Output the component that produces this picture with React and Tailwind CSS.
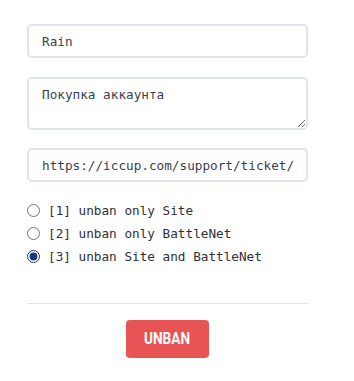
import React, { useState } from "react";

function App() {
  const [nick, setNick] = useState("Rain");
  const [reason, setReason] = useState("Покупка аккаунта");
  const [link, setLink] = useState("https://iccup.com/support/ticket/");
  const [mode, setMode] = useState("3");

  const options = [
    { id: "1", label: "[1] unban only Site" },
    { id: "2", label: "[2] unban only BattleNet" },
    { id: "3", label: "[3] unban Site and BattleNet" },
  ];

  return (
    <div className="w-[354px] h-[381px] bg-white px-[27px] pt-[24px] font-['DejaVu_Sans_Mono','Liberation_Mono',monospace] text-[12.7px] text-[#3b3f4a]">
      <input
        type="text"
        value={nick}
        onChange={(e) => setNick(e.target.value)}
        className="block w-[281px] h-[34px] border-2 border-[#dfe3ee] rounded-[5px] px-[13px] outline-none"
      />
      <textarea
        value={reason}
        onChange={(e) => setReason(e.target.value)}
        className="block mt-[19px] w-[281px] h-[53px] border-2 border-[#dfe3ee] rounded-[5px] px-[13px] pt-[6px] outline-none resize-y"
      />
      <input
        type="text"
        value={link}
        onChange={(e) => setLink(e.target.value)}
        className="block mt-[18px] w-[281px] h-[34px] border-2 border-[#dfe3ee] rounded-[5px] pl-[13px] pr-[8px] outline-none"
      />

      <div className="mt-[17px] flex flex-col">
        {options.map((o) => (
          <label key={o.id} className="flex items-center h-[23px] text-[#2f3136] cursor-pointer">
            <input
              type="radio"
              name="mode"
              checked={mode === o.id}
              onChange={() => setMode(o.id)}
              className="w-[13px] h-[13px] ml-0 mr-[8px] accent-[#1a3a7a]"
            />
            {o.label}
          </label>
        ))}
      </div>

      <div className="mt-[35px] w-[281px] border-t border-[#e4e4e4]"></div>

      <div className="flex justify-center w-[281px] mt-[16px]">
        <button className="w-[83px] h-[38px] rounded-[4px] bg-[#e85454] text-white font-bold text-[16px] font-['Roboto','Liberation_Sans',sans-serif]">
          <span className="inline-block scale-x-[0.85]">UNBAN</span>
        </button>
      </div>
    </div>
  );
}

export default App;
